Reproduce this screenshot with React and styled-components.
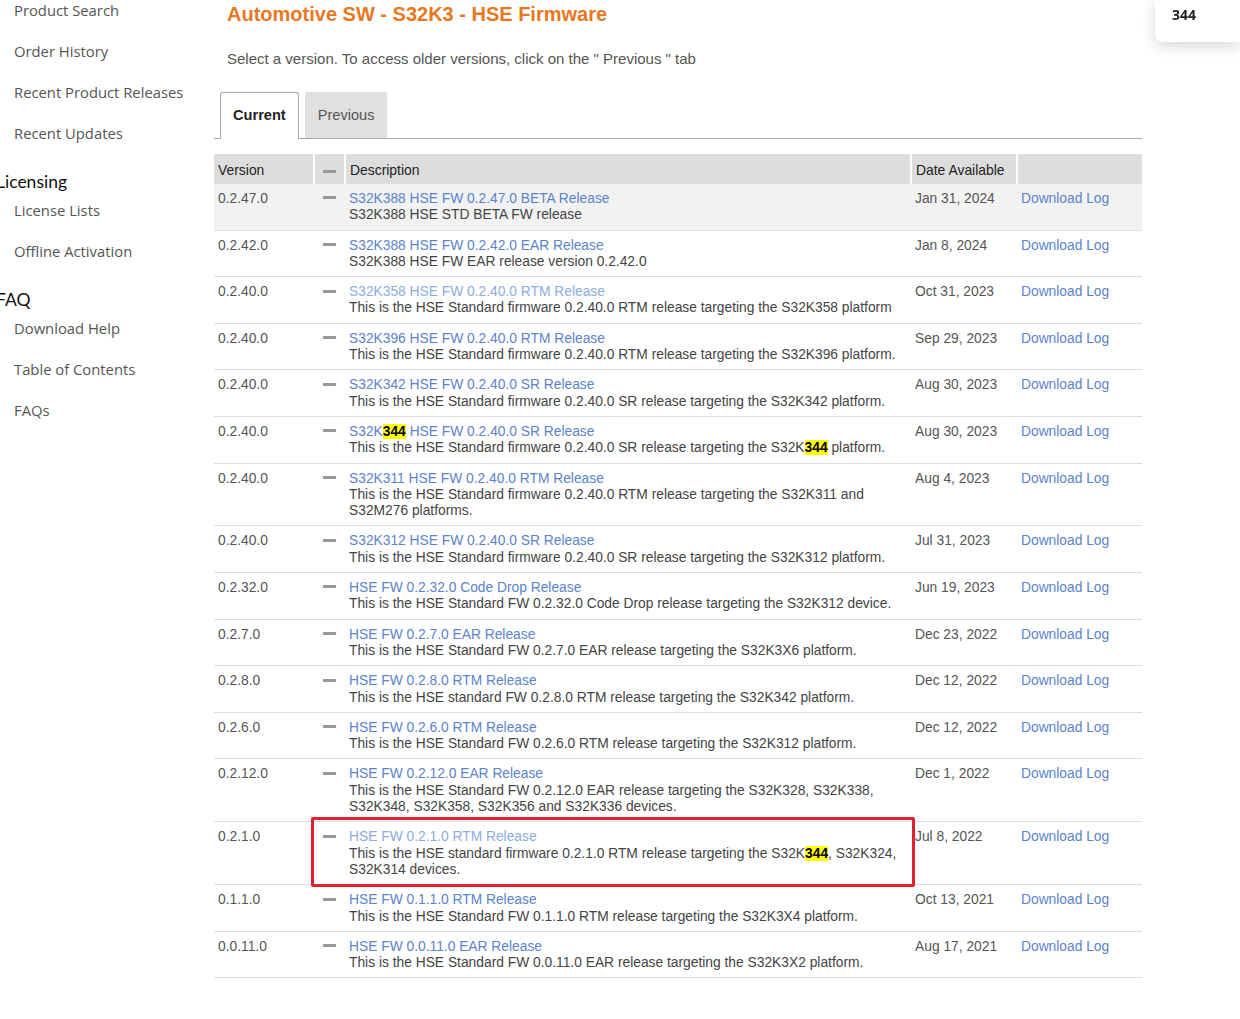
import React from 'react';
import styled, { createGlobalStyle } from 'styled-components';

const GlobalStyle = createGlobalStyle`
  html, body {
    margin: 0;
    padding: 0;
    background: #ffffff;
    font-family: "Liberation Sans", Arial, sans-serif;
    overflow: hidden;
  }
`;

const Page = styled.div`
  display: flex;
  align-items: flex-start;
  width: 1240px;
  min-height: 1019px;
`;

const Sidebar = styled.nav`
  width: 214px;
  flex-shrink: 0;
  margin-top: -10.5px;
`;

const NavItem = styled.a`
  display: block;
  padding-left: 14px;
  line-height: 41px;
  font-family: "Open Sans", sans-serif;
  font-size: 14.8px;
  color: #555555;
  text-decoration: none;
  white-space: nowrap;
`;

const NavHeader = styled.div`
  margin-left: -4px;
  padding-top: 20px;
  line-height: 16px;
  font-family: Lato, sans-serif;
  font-size: 17.5px;
  color: #111111;
`;

const Main = styled.main`
  width: 928px;
  flex-shrink: 0;
`;

const Title = styled.h1`
  margin: 2px 0 0 13px;
  font-size: 20px;
  line-height: 24px;
  font-weight: bold;
  color: #e87722;
`;

const Intro = styled.p`
  margin: 23px 0 0 13px;
  font-size: 15px;
  line-height: 20px;
  color: #555555;
`;

const TabBar = styled.div`
  display: flex;
  gap: 6px;
  margin-top: 23px;
  padding-left: 6px;
  height: 46px;
  border-bottom: 1px solid #aaaaaa;
`;

const Tab = styled.div`
  box-sizing: border-box;
  height: ${p => (p.$active ? '47px' : '46px')};
  padding: 0 12px;
  line-height: 45px;
  font-size: 14.6px;
  border-radius: 3px 3px 0 0;
  font-weight: ${p => (p.$active ? 'bold' : 'normal')};
  color: ${p => (p.$active ? '#222222' : '#555555')};
  background: ${p => (p.$active ? '#ffffff' : '#e0e0e0')};
  border: 1px solid ${p => (p.$active ? '#aaaaaa' : '#e0e0e0')};
  border-bottom: none;
  cursor: pointer;
`;

const Table = styled.table`
  margin-top: 15px;
  width: 928px;
  border-collapse: collapse;
  table-layout: fixed;
  font-size: 13.8px;
  line-height: 16.3px;
`;

const HeadCell = styled.th`
  height: 28px;
  padding: 2px 4px 0;
  background: #dddddd;
  color: #222222;
  font-weight: normal;
  font-size: 13.9px;
  text-align: ${p => (p.$center ? 'center' : 'left')};
  vertical-align: middle;
  border-left: ${p => (p.$first ? 'none' : '2px solid #ffffff')};
`;

const Row = styled.tr`
  background: ${p => (p.$shaded ? '#f2f2f2' : '#ffffff')};
  border-bottom: 1px solid #dddddd;
`;

const Cell = styled.td`
  position: relative;
  padding: 7px 4px 6px;
  vertical-align: top;
  color: ${p => (p.$dark ? '#444444' : '#555555')};
  text-align: ${p => (p.$center ? 'center' : 'left')};
`;

const Dash = styled.span`
  display: inline-block;
  width: 13px;
  height: 3px;
  background: #999999;
  vertical-align: middle;
  margin-bottom: ${p => (p.$head ? '0' : '3px')};
`;

const DocLink = styled.a`
  color: ${p => (p.$visited ? '#8aaee0' : '#5b83ce')};
  text-decoration: none;
  cursor: pointer;
`;

const Mark = styled.mark`
  background: #ffff00;
  color: #000000;
  font-weight: bold;
`;

const Callout = styled.div`
  position: absolute;
  top: -5px;
  left: -34px;
  right: -4px;
  bottom: -3px;
  border: 3.5px solid #e5202e;
  border-radius: 2px;
  pointer-events: none;
  z-index: 2;
`;

const FindBadge = styled.div`
  position: fixed;
  top: 0;
  right: 0;
  width: 85px;
  height: 42px;
  box-sizing: border-box;
  padding: 6px 0 0 17px;
  background: #ffffff;
  border-radius: 0 0 0 8px;
  box-shadow: 0 4px 14px rgba(0, 0, 0, 0.16);
  font-family: "Open Sans", sans-serif;
  font-weight: bold;
  font-size: 14px;
  line-height: 18px;
  color: #222222;
`;

const releases = [
  { v: '0.2.47.0', t: 'S32K388 HSE FW 0.2.47.0 BETA Release', d: 'S32K388 HSE STD BETA FW release', date: 'Jan 31, 2024' },
  { v: '0.2.42.0', t: 'S32K388 HSE FW 0.2.42.0 EAR Release', d: 'S32K388 HSE FW EAR release version 0.2.42.0', date: 'Jan 8, 2024' },
  { v: '0.2.40.0', t: 'S32K358 HSE FW 0.2.40.0 RTM Release', d: 'This is the HSE Standard firmware 0.2.40.0 RTM release targeting the S32K358 platform', date: 'Oct 31, 2023', visited: true },
  { v: '0.2.40.0', t: 'S32K396 HSE FW 0.2.40.0 RTM Release', d: 'This is the HSE Standard firmware 0.2.40.0 RTM release targeting the S32K396 platform.', date: 'Sep 29, 2023' },
  { v: '0.2.40.0', t: 'S32K342 HSE FW 0.2.40.0 SR Release', d: 'This is the HSE Standard firmware 0.2.40.0 SR release targeting the S32K342 platform.', date: 'Aug 30, 2023' },
  { v: '0.2.40.0', t: 'S32K344 HSE FW 0.2.40.0 SR Release', d: 'This is the HSE Standard firmware 0.2.40.0 SR release targeting the S32K344 platform.', date: 'Aug 30, 2023' },
  { v: '0.2.40.0', t: 'S32K311 HSE FW 0.2.40.0 RTM Release', d: 'This is the HSE Standard firmware 0.2.40.0 RTM release targeting the S32K311 and S32M276 platforms.', date: 'Aug 4, 2023' },
  { v: '0.2.40.0', t: 'S32K312 HSE FW 0.2.40.0 SR Release', d: 'This is the HSE Standard firmware 0.2.40.0 SR release targeting the S32K312 platform.', date: 'Jul 31, 2023' },
  { v: '0.2.32.0', t: 'HSE FW 0.2.32.0 Code Drop Release', d: 'This is the HSE Standard FW 0.2.32.0 Code Drop release targeting the S32K312 device.', date: 'Jun 19, 2023' },
  { v: '0.2.7.0', t: 'HSE FW 0.2.7.0 EAR Release', d: 'This is the HSE Standard FW 0.2.7.0 EAR release targeting the S32K3X6 platform.', date: 'Dec 23, 2022' },
  { v: '0.2.8.0', t: 'HSE FW 0.2.8.0 RTM Release', d: 'This is the HSE standard FW 0.2.8.0 RTM release targeting the S32K342 platform.', date: 'Dec 12, 2022' },
  { v: '0.2.6.0', t: 'HSE FW 0.2.6.0 RTM Release', d: 'This is the HSE Standard FW 0.2.6.0 RTM release targeting the S32K312 platform.', date: 'Dec 12, 2022' },
  { v: '0.2.12.0', t: 'HSE FW 0.2.12.0 EAR Release', d: 'This is the HSE Standard FW 0.2.12.0 EAR release targeting the S32K328, S32K338, S32K348, S32K358, S32K356 and S32K336 devices.', date: 'Dec 1, 2022' },
  { v: '0.2.1.0', t: 'HSE FW 0.2.1.0 RTM Release', d: 'This is the HSE standard firmware 0.2.1.0 RTM release targeting the S32K344, S32K324, S32K314 devices.', date: 'Jul 8, 2022', visited: true, boxed: true },
  { v: '0.1.1.0', t: 'HSE FW 0.1.1.0 RTM Release', d: 'This is the HSE Standard FW 0.1.1.0 RTM release targeting the S32K3X4 platform.', date: 'Oct 13, 2021' },
  { v: '0.0.11.0', t: 'HSE FW 0.0.11.0 EAR Release', d: 'This is the HSE Standard FW 0.0.11.0 EAR release targeting the S32K3X2 platform.', date: 'Aug 17, 2021' },
];

// highlight the searched "344" the way the browser's find bar does
const withHits = text =>
  text.split('S32K344').flatMap((part, i) =>
    i === 0 ? [part] : [<React.Fragment key={i}>S32K<Mark>344</Mark></React.Fragment>, part]
  );

const App = () => (
  <>
    <GlobalStyle />
    <Page>
      <Sidebar>
        <NavItem>Product Search</NavItem>
        <NavItem>Order History</NavItem>
        <NavItem>Recent Product Releases</NavItem>
        <NavItem>Recent Updates</NavItem>
        <NavHeader>Licensing</NavHeader>
        <NavItem>License Lists</NavItem>
        <NavItem>Offline Activation</NavItem>
        <NavHeader>FAQ</NavHeader>
        <NavItem>Download Help</NavItem>
        <NavItem>Table of Contents</NavItem>
        <NavItem>FAQs</NavItem>
      </Sidebar>
      <Main>
        <Title>Automotive SW - S32K3 - HSE Firmware</Title>
        <Intro>Select a version. To access older versions, click on the " Previous " tab</Intro>
        <TabBar>
          <Tab $active>Current</Tab>
          <Tab>Previous</Tab>
        </TabBar>
        <Table>
          <colgroup>
            <col style={{ width: 100 }} />
            <col style={{ width: 31 }} />
            <col style={{ width: 566 }} />
            <col style={{ width: 106 }} />
            <col style={{ width: 125 }} />
          </colgroup>
          <thead>
            <tr>
              <HeadCell $first>Version</HeadCell>
              <HeadCell $center><Dash $head /></HeadCell>
              <HeadCell>Description</HeadCell>
              <HeadCell>Date Available</HeadCell>
              <HeadCell></HeadCell>
            </tr>
          </thead>
          <tbody>
            {releases.map((r, i) => (
              <Row key={i} $shaded={i === 0}>
                <Cell>{r.v}</Cell>
                <Cell $center><Dash /></Cell>
                <Cell $dark>
                  <DocLink $visited={r.visited}>{withHits(r.t)}</DocLink>
                  <br />
                  {withHits(r.d)}
                  {r.boxed && <Callout />}
                </Cell>
                <Cell>{r.date}</Cell>
                <Cell><DocLink>Download Log</DocLink></Cell>
              </Row>
            ))}
          </tbody>
        </Table>
      </Main>
    </Page>
    <FindBadge>344</FindBadge>
  </>
);

export default App;
